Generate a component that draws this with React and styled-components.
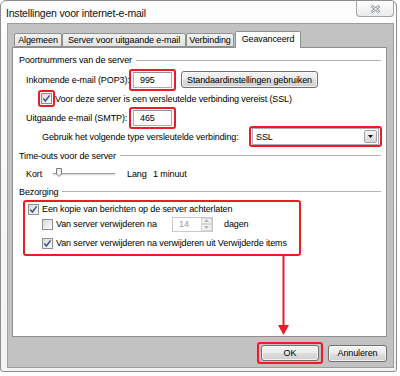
import styled, { createGlobalStyle } from "styled-components"

const GlobalStyle = createGlobalStyle`
  body {
    margin: 0;
    background: #fff;
    font-family: "Liberation Sans", Arial, sans-serif;
    font-size: 9px;
    letter-spacing: -0.12px;
    color: #000;
  }
`

const RED = "#ec1c24"

const Window = styled.div`
  position: relative;
  box-sizing: border-box;
  width: 397px;
  height: 372px;
  border: 1px solid #8d8d8d;
  border-radius: 6px 6px 3px 3px;
  background: linear-gradient(#fdfdfd, #f1f2f4);
`

const TitleBar = styled.div`
  display: flex;
  align-items: flex-start;
  height: 22px;
`

const Title = styled.div`
  padding: 6px 0 0 5px;
  font-size: 10.5px;
  letter-spacing: -0.2px;
  line-height: 13px;
  color: #111;
`

const CloseButton = styled.div`
  box-sizing: border-box;
  width: 38px;
  height: 16px;
  margin: 0 2px 0 auto;
  border: 1px solid #a3a3a3;
  border-top: none;
  border-radius: 0 0 4px 4px;
  background: linear-gradient(#fefefe, #e8eaed);
  display: flex;
  align-items: center;
  justify-content: center;
`

const Client = styled.div`
  box-sizing: border-box;
  width: 387px;
  height: 345px;
  margin-left: 6px;
  border: 1px solid #9d9d9d;
  background: #c2c2c2;
  padding: 7px 0 0 4px;
`

const TabStrip = styled.div`
  position: relative;
  z-index: 1;
  display: flex;
  align-items: flex-end;
  height: 16px;
  padding-left: 2px;
`

const Tab = styled.div`
  box-sizing: border-box;
  width: ${p => p.$w}px;
  height: ${p => (p.$active ? 17 : 14)}px;
  margin-left: ${p => (p.$active ? 1 : 0)}px;
  margin-bottom: ${p => (p.$active ? -1 : 0)}px;
  border: 1px solid #8e8f8f;
  border-bottom: ${p => (p.$active ? "none" : "1px solid #8e8f8f")};
  border-radius: 2px 2px 0 0;
  background: ${p => (p.$active ? "#fff" : "linear-gradient(#f3f3f3, #e2e2e2)")};
  display: flex;
  align-items: center;
  justify-content: center;
  padding-bottom: ${p => (p.$active ? 2 : 0)}px;
  white-space: nowrap;
`

const Panel = styled.div`
  box-sizing: border-box;
  width: 375px;
  height: 290px;
  border: 1px solid #8e8f8f;
  background: #fff;
  padding: 2px 0 0 6px;
`

const GroupHeader = styled.div`
  display: flex;
  align-items: center;
  gap: 4px;
  height: ${p => p.$h}px;
  margin-right: 5px;
  white-space: nowrap;

  &::after {
    content: "";
    flex: 1;
    border-top: 1px solid #b2b2b2;
  }
`

const Row = styled.div`
  display: flex;
  align-items: center;
  height: ${p => p.$h}px;
  padding-left: ${p => p.$indent || 0}px;
  gap: ${p => p.$gap || 0}px;
  white-space: nowrap;
`

const Label = styled.span`
  display: inline-block;
  width: ${p => (p.$w ? `${p.$w}px` : "auto")};
  flex: none;
`

const Mark = styled.span`
  display: inline-flex;
  align-items: center;
  border: 2px solid ${RED};
  border-radius: 3px;
  padding: ${p => p.$pad || "1px"};
`

const TextBox = styled.div`
  box-sizing: border-box;
  width: ${p => p.$w}px;
  height: 16px;
  border: 1px solid #abadb3;
  border-top-color: #8f9299;
  background: #fff;
  padding-left: 6px;
  display: flex;
  align-items: center;
`

const PushButton = styled.div`
  box-sizing: border-box;
  width: ${p => p.$w}px;
  height: ${p => p.$h || 17}px;
  margin-left: ${p => p.$ml || 0}px;
  border: 1px solid #707070;
  border-radius: 3px;
  background: linear-gradient(#f3f3f3 0%, #ebebeb 48%, #dddddd 52%, #cfcfcf 100%);
  box-shadow: inset 0 0 0 1px rgba(255, 255, 255, 0.7);
  display: flex;
  align-items: center;
  justify-content: center;
`

const Box = styled.span`
  box-sizing: border-box;
  display: inline-flex;
  align-items: center;
  justify-content: center;
  width: 11px;
  height: 11px;
  flex: none;
  border: 1px solid #8f8f8f;
  background: linear-gradient(135deg, #d9d9d9, #fbfbfb);
`

const Select = styled.div`
  box-sizing: border-box;
  width: 127px;
  height: 17px;
  border: 1px solid #abadb3;
  background: #fff;
  display: flex;
  align-items: center;
  padding: 0 1px 0 3px;
`

const SelectValue = styled.span`
  flex: 1;
`

const DropButton = styled.span`
  box-sizing: border-box;
  width: 13px;
  height: 13px;
  border: 1px solid #a5a5a5;
  border-radius: 2px;
  background: linear-gradient(#f4f4f4, #d8d8d8);
  display: flex;
  align-items: center;
  justify-content: center;
`

const Slider = styled.div`
  position: relative;
  box-sizing: border-box;
  width: 62px;
  height: 3px;
  margin-right: 12px;
  border-top: 1px solid #a0a0a0;
  border-bottom: 1px solid #f4f4f4;
  background: #dcdcdc;
  flex: none;
`

const Thumb = styled.svg`
  position: absolute;
  left: 3px;
  top: -6px;
`

const DeliveryBox = styled.div`
  box-sizing: border-box;
  width: 278px;
  height: 56px;
  margin-left: 4px;
  border: 2px solid ${RED};
  border-radius: 3px;
  padding-left: 3px;
`

const Spin = styled.div`
  box-sizing: border-box;
  width: 41px;
  height: 15px;
  margin-right: 8px;
  border: 1px solid #c9c9c9;
  background: #fff;
  color: #9a9a9a;
  display: flex;
  align-items: center;
  padding-left: 6px;
`

const SpinValue = styled.span`
  flex: 1;
`

const SpinButtons = styled.span`
  display: flex;
  flex-direction: column;
  width: 11px;
  height: 13px;
`

const SpinHalf = styled.span`
  flex: 1;
  border: 1px solid #d6d6d6;
  background: #f3f3f3;
  display: flex;
  align-items: center;
  justify-content: center;
`

const ButtonRow = styled.div`
  display: flex;
  justify-content: flex-end;
  align-items: center;
  gap: 5px;
  width: 375px;
  margin-top: 5px;
`

const Arrow = styled.svg`
  position: absolute;
  left: 277px;
  top: 255px;
  pointer-events: none;
`

function Check({ checked }) {
  return (
    <Box>
      {checked && (
        <svg width="9" height="9" viewBox="0 0 9 9">
          <path d="M1.3 4.6 L3.4 7 L7.6 1.4" fill="none" stroke="#3f5286" strokeWidth="1.5" />
        </svg>
      )}
    </Box>
  )
}

function Tri({ up, color = "#000" }) {
  return (
    <svg width="5" height="3" viewBox="0 0 5 3">
      <path d={up ? "M0 3 L2.5 0 L5 3 Z" : "M0 0 L5 0 L2.5 3 Z"} fill={color} />
    </svg>
  )
}

export default function App() {
  return (
    <>
      <GlobalStyle />
      <Window>
        <TitleBar>
          <Title>Instellingen voor internet-e-mail</Title>
          <CloseButton>
            <svg width="11" height="8" viewBox="0 0 11 8">
              <path d="M1.5 1 L9.5 7 M9.5 1 L1.5 7" stroke="#8d8d8d" strokeWidth="2.6" />
              <path d="M1.5 1 L9.5 7 M9.5 1 L1.5 7" stroke="#fff" strokeWidth="1" />
            </svg>
          </CloseButton>
        </TitleBar>

        <Client>
          <TabStrip>
            <Tab $w={48}>Algemeen</Tab>
            <Tab $w={124}>Server voor uitgaande e-mail</Tab>
            <Tab $w={48}>Verbinding</Tab>
            <Tab $w={66} $active>Geavanceerd</Tab>
          </TabStrip>

          <Panel>
            <GroupHeader $h={20}>Poortnummers van de server</GroupHeader>
            <Row $h={19} $indent={7}>
              <Label $w={103}>Inkomende e-mail (POP3):</Label>
              <Mark $pad="1px 2px">
                <TextBox $w={39}>995</TextBox>
              </Mark>
              <PushButton $w={137} $ml={5}>Standaardinstellingen gebruiken</PushButton>
            </Row>
            <Row $h={19} $indent={19}>
              <Mark $pad="1px">
                <Check checked />
              </Mark>
              <span>Voor deze server is een versleutelde verbinding vereist (SSL)</span>
            </Row>
            <Row $h={19} $indent={7}>
              <Label $w={103}>Uitgaande e-mail (SMTP):</Label>
              <Mark $pad="1px 2px">
                <TextBox $w={39}>465</TextBox>
              </Mark>
            </Row>
            <Row $h={19} $indent={23}>
              <Label $w={207}>Gebruik het volgende type versleutelde verbinding:</Label>
              <Mark $pad="0 1px">
                <Select>
                  <SelectValue>SSL</SelectValue>
                  <DropButton>
                    <Tri />
                  </DropButton>
                </Select>
              </Mark>
            </Row>

            <GroupHeader $h={19}>Time-outs voor de server</GroupHeader>
            <Row $h={18} $indent={7}>
              <Label $w={27}>Kort</Label>
              <Slider>
                <Thumb width="6" height="9" viewBox="0 0 6 9">
                  <path d="M0.5 0.5 H5.5 V6 L3 8.5 L0.5 6 Z" fill="#f2f2f2" stroke="#7a7a7a" />
                </Thumb>
              </Slider>
              <Label $w={26}>Lang</Label>
              <span>1 minuut</span>
            </Row>

            <GroupHeader $h={17}>Bezorging</GroupHeader>
            <DeliveryBox>
              <Row $h={14} $gap={3}>
                <Check checked />
                <span>Een kopie van berichten op de server achterlaten</span>
              </Row>
              <Row $h={16} $indent={14} $gap={3}>
                <Check />
                <Label $w={113}>Van server verwijderen na</Label>
                <Spin>
                  <SpinValue>14</SpinValue>
                  <SpinButtons>
                    <SpinHalf>
                      <Tri up color="#b5b5b5" />
                    </SpinHalf>
                    <SpinHalf>
                      <Tri color="#b5b5b5" />
                    </SpinHalf>
                  </SpinButtons>
                </Spin>
                <span>dagen</span>
              </Row>
              <Row $h={22} $indent={14} $gap={3}>
                <Check checked />
                <span>Van server verwijderen na verwijderen uit Verwijderde items</span>
              </Row>
            </DeliveryBox>
          </Panel>

          <ButtonRow>
            <Mark $pad="1px 2px">
              <PushButton $w={58} $h={16}>OK</PushButton>
            </Mark>
            <PushButton $w={59}>Annuleren</PushButton>
          </ButtonRow>
        </Client>

        <Arrow width="12" height="80" viewBox="0 0 12 80">
          <path d="M5.5 0 V70" stroke={RED} strokeWidth="2" />
          <path d="M0 69 H11 L5.5 79 Z" fill={RED} />
        </Arrow>
      </Window>
    </>
  )
}
